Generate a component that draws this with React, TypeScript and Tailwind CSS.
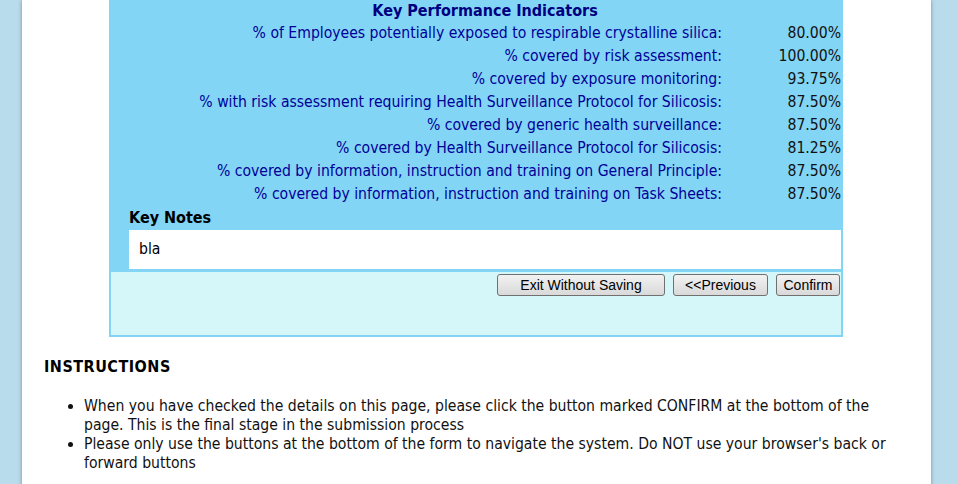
import React from "react";

const rows: [string, string][] = [
  ["% of Employees potentially exposed to respirable crystalline silica:", "80.00%"],
  ["% covered by risk assessment:", "100.00%"],
  ["% covered by exposure monitoring:", "93.75%"],
  ["% with risk assessment requiring Health Surveillance Protocol for Silicosis:", "87.50%"],
  ["% covered by generic health surveillance:", "87.50%"],
  ["% covered by Health Surveillance Protocol for Silicosis:", "81.25%"],
  ["% covered by information, instruction and training on General Principle:", "87.50%"],
  ["% covered by information, instruction and training on Task Sheets:", "87.50%"],
];

const font = { fontFamily: "'DejaVu Sans Condensed', 'Liberation Sans', sans-serif" };

function Btn({ children, w }: { children: React.ReactNode; w: string }) {
  return (
    <button
      className={`h-[22px] ${w} rounded-[3px] border border-[#707070] bg-gradient-to-b from-[#f2f2f2] to-[#d9d9d9] text-[14px] leading-[20px] text-black`}
      style={{ fontFamily: "'Liberation Sans', Arial, sans-serif" }}
    >
      {children}
    </button>
  );
}

export default function App() {
  return (
    <div className="flex min-h-screen bg-[#b9dcec]" style={font}>
      <div className="ml-[22px] w-[909px] bg-white shadow-[0_0_4px_rgba(0,0,0,0.35)] pb-[20px]">
        <div className="ml-[87px] w-[734px] bg-[#83d5f5]">
          <div className="h-[22px] pl-[18px] text-center text-[16px] font-bold leading-[21px] text-[#000080]">
            Key Performance Indicators
          </div>
          <div className="grid grid-cols-[1fr_121px] text-[15.6px] leading-[23px]">
            {rows.map(([l, v]) => (
              <React.Fragment key={l}>
                <div className="text-right text-[#000099]">{l}</div>
                <div className="pr-[2px] text-right text-[#111]">{v}</div>
              </React.Fragment>
            ))}
          </div>
          <div className="pl-[20px] pr-[2px]">
            <div className="text-[16px] font-bold leading-[24px] text-black">Key Notes</div>
            <div className="h-[39px] bg-white pl-[10px] text-[15.6px] leading-[39px] text-black">bla</div>
          </div>
          <div className="mt-[3px] h-[65px] border-x-2 border-b-2 border-[#83d5f5] bg-[#d5f7f9]">
            <div className="flex justify-end gap-[8px] pr-[1px] pt-[2px]">
              <Btn w="w-[168px]">Exit Without Saving</Btn>
              <Btn w="w-[95px]">&lt;&lt;Previous</Btn>
              <Btn w="w-[64px]">Confirm</Btn>
            </div>
          </div>
        </div>
        <div className="px-[22px] pt-[19px]">
          <div className="text-[16px] font-bold leading-[22px] tracking-[0.5px] text-black">INSTRUCTIONS</div>
          <ul className="mt-[19px] list-disc pl-[40px] text-[15.6px] leading-[19px] text-[#111]">
            <li>
              When you have checked the details on this page, please click the button marked CONFIRM at the bottom of the
              page. This is the final stage in the submission process
            </li>
            <li>
              Please only use the buttons at the bottom of the form to navigate the system. Do NOT use your browser's back or
              forward buttons
            </li>
          </ul>
        </div>
      </div>
    </div>
  );
}
